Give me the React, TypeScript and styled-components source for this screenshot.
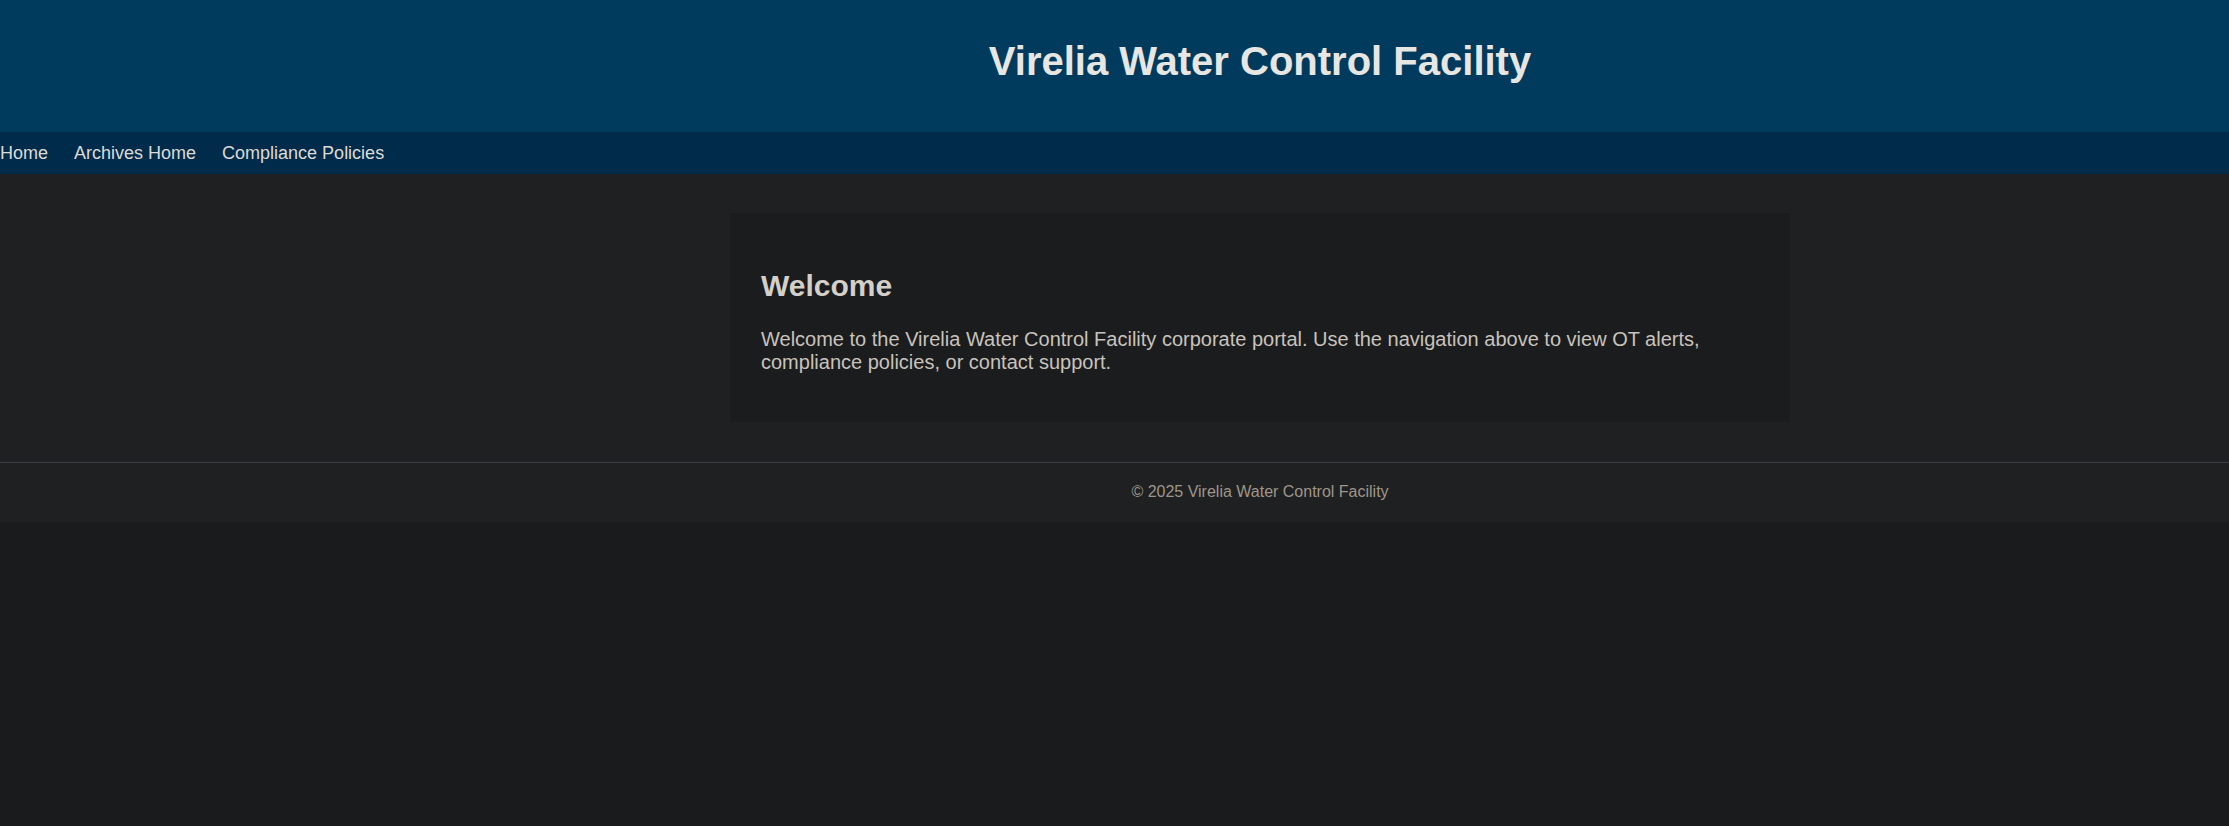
import React from "react";
import styled, { createGlobalStyle } from "styled-components";

const GlobalStyle = createGlobalStyle`
  html, body {
    margin: 0;
    padding: 0;
    background: #1a1b1d;
    font-family: "Liberation Sans", Arial, Helvetica, sans-serif;
  }
  * { box-sizing: border-box; }
`;

const OFFSET = 291;

const Header = styled.header`
  background: #003a5c;
  padding: 38px 0 48px ${OFFSET}px;
  text-align: center;
`;

const Title = styled.h1`
  margin: 0;
  font-size: 40px;
  font-weight: 700;
  line-height: 46px;
  color: #e8e6e3;
`;

const Nav = styled.nav`
  background: #002b4a;
  display: flex;
  gap: 26px;
  padding: 11px 0 10px;
`;

const NavLink = styled.a`
  font-size: 18px;
  line-height: 21px;
  color: #dedad5;
  text-decoration: none;
`;

const Main = styled.main`
  background: #1f2022;
  padding: 39px 0 40px ${OFFSET}px;
`;

const Card = styled.section`
  width: 1060px;
  margin: 0 auto;
  background: #1b1c1e;
  padding: 31px;
`;

const Heading = styled.h2`
  margin: 25px 0;
  font-size: 30px;
  font-weight: 700;
  color: #d3cfc9;
`;

const Text = styled.p`
  margin: 0 0 18px;
  font-size: 20px;
  line-height: 22.6px;
  color: #c8c3bc;
`;

const Footer = styled.footer`
  background: #1f2022;
  border-top: 1px solid #3b3d40;
  padding: 20px 0 21px ${OFFSET}px;
  text-align: center;
  font-size: 16px;
  color: #9e9689;
`;

export default function App() {
  return (
    <>
      <GlobalStyle />
      <Header>
        <Title>Virelia Water Control Facility</Title>
      </Header>
      <Nav>
        <NavLink href="#">Home</NavLink>
        <NavLink href="#">Archives Home</NavLink>
        <NavLink href="#">Compliance Policies</NavLink>
      </Nav>
      <Main>
        <Card>
          <Heading>Welcome</Heading>
          <Text>
            Welcome to the Virelia Water Control Facility corporate portal. Use
            the navigation above to view OT alerts, compliance policies, or
            contact support.
          </Text>
        </Card>
      </Main>
      <Footer>© 2025 Virelia Water Control Facility</Footer>
    </>
  );
}
